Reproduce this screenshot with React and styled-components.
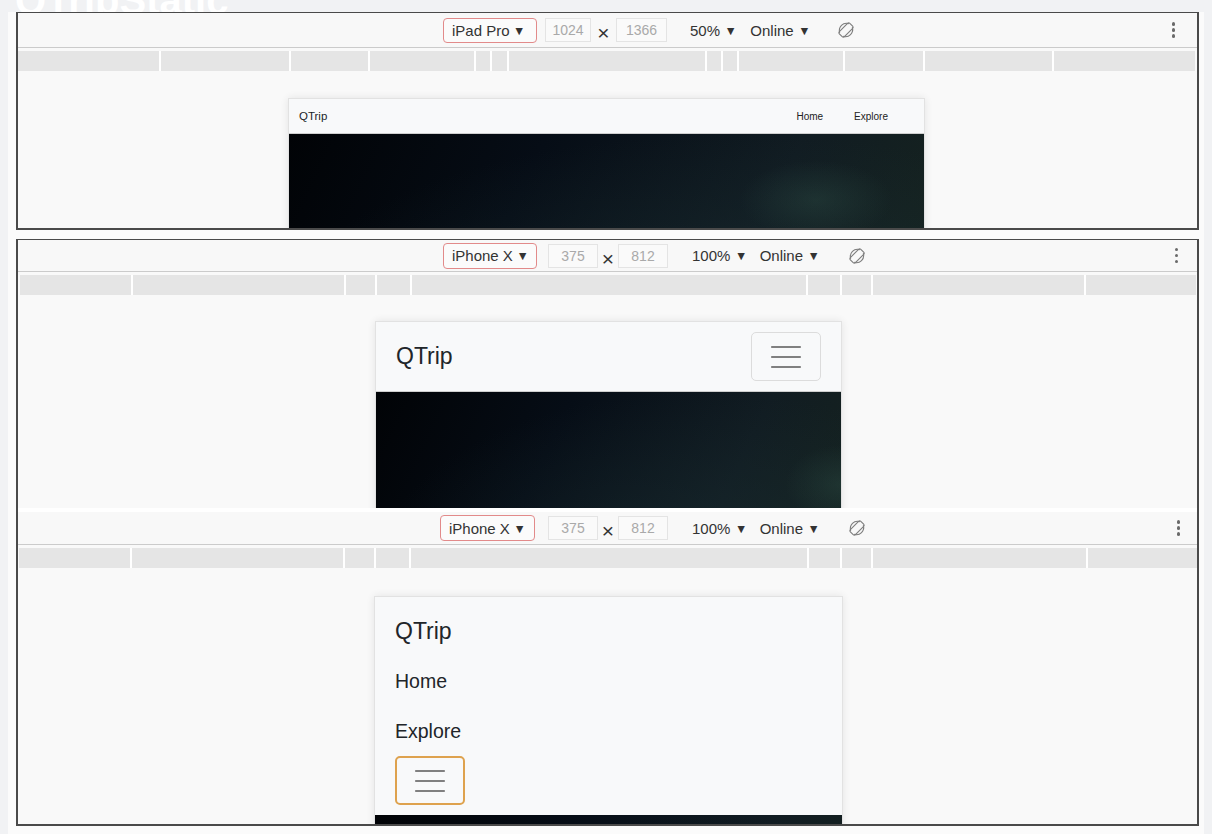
import React from "react";
import styled, { createGlobalStyle } from "styled-components";

const GlobalStyle = createGlobalStyle`
  html, body {
    margin: 0;
    padding: 0;
    background: #f1f2f4;
  }
  body {
    font-family: "Liberation Sans", Arial, sans-serif;
    overflow: hidden;
  }
`;

const Page = styled.div`
  width: 1212px;
  height: 834px;
  overflow: hidden;
`;

const TitleBar = styled.div`
  height: 12px;
  overflow: hidden;
  padding-left: 15px;
`;

const TitleText = styled.h1`
  margin: -20px 0 0;
  font-size: 40px;
  line-height: 40px;
  font-weight: 700;
  color: #ffffff;
`;

const Sheet = styled.div`
  margin-left: 8px;
  width: 1196px;
  height: 822px;
  background: #fbfbfb;
  display: flex;
  flex-direction: column;
`;

const Frame = styled.section`
  box-sizing: border-box;
  margin: ${(p) => p.$mt}px 0 0 8px;
  width: 1183px;
  height: ${(p) => p.$h}px;
  flex-shrink: 0;
  display: flex;
  flex-direction: column;
  overflow: hidden;
  background: #f9f9f9;
  border-left: 2px solid #4a4a4a;
  border-right: 2px solid #4a4a4a;
  border-top: ${(p) => (p.$top ? "1px solid #4a4a4a" : "none")};
  border-bottom: ${(p) => (p.$bottom ? "2px solid #4a4a4a" : "none")};
`;

const Strip = styled.div`
  height: ${(p) => p.$h}px;
  background: #ffffff;
  flex-shrink: 0;
`;

const Toolbar = styled.div`
  box-sizing: border-box;
  height: ${(p) => p.$h}px;
  flex-shrink: 0;
  display: flex;
  align-items: center;
  padding-left: ${(p) => p.$pl}px;
  padding-right: ${(p) => p.$pr}px;
  background: #f8f8f8;
  border-bottom: 1px solid #cbcbcb;
  color: #333;
  font-size: 15px;
`;

const DeviceSelect = styled.div`
  box-sizing: border-box;
  width: ${(p) => p.$w}px;
  height: ${(p) => p.$h}px;
  display: flex;
  align-items: center;
  gap: 6px;
  padding-left: 8px;
  border: 1px solid #e28a8a;
  border-radius: 4px;
  background: #fbfbfb;
  white-space: nowrap;
`;

const Caret = styled.span`
  font-family: "DejaVu Sans", sans-serif;
  font-size: 9.5px;
  color: #333;
`;

const SizeInput = styled.div`
  box-sizing: border-box;
  width: ${(p) => p.$w}px;
  height: 24px;
  margin-left: ${(p) => p.$ml || 0}px;
  display: flex;
  align-items: center;
  justify-content: center;
  border: 1px solid #e4e4e4;
  background: #fafafa;
  color: #a9a9a9;
  font-size: 14px;
`;

const Times = styled.span`
  width: ${(p) => p.$w}px;
  text-align: center;
  font-size: 21px;
  line-height: 21px;
  color: #333;
  padding-top: 5px;
`;

const Menu = styled.div`
  margin-left: ${(p) => p.$ml}px;
  display: flex;
  align-items: center;
  gap: 7px;
  white-space: nowrap;
`;

const RotateButton = styled.svg`
  margin-left: ${(p) => p.$ml}px;
  width: 18px;
  height: 18px;
  flex-shrink: 0;
`;

const Kebab = styled.div`
  margin-left: auto;
  display: flex;
  flex-direction: column;
  gap: 2.5px;
  span {
    width: 3.5px;
    height: 3.5px;
    border-radius: 50%;
    background: #6a6a6a;
  }
`;

const Ruler = styled.div`
  margin: 3px 0 0 ${(p) => p.$pl}px;
  width: fit-content;
  height: 20px;
  flex-shrink: 0;
  display: flex;
  gap: 2px;
  background: #ffffff;
`;

const Segment = styled.div`
  height: 100%;
  background: #e5e5e5;
`;

const Viewport = styled.div`
  flex: 1;
  display: flex;
  justify-content: center;
  padding-top: ${(p) => p.$pt}px;
  padding-left: ${(p) => Math.max(0, p.$shift)}px;
  padding-right: ${(p) => Math.max(0, -p.$shift)}px;
`;

const Preview = styled.div`
  box-sizing: border-box;
  width: ${(p) => p.$w}px;
  flex-shrink: 0;
  border: 1px solid #e2e2e2;
  background: #f8f9fa;
  box-shadow: 0 0 8px rgba(0, 0, 0, 0.09);
  display: flex;
  flex-direction: column;
`;

const Navbar = styled.nav`
  box-sizing: border-box;
  height: ${(p) => p.$h}px;
  display: flex;
  align-items: center;
  padding: 0 ${(p) => p.$px}px;
  color: #212529;
  border-bottom: 1px solid #cfcfcf;
`;

const Brand = styled.span`
  font-size: ${(p) => p.$size}px;
`;

const NavLinks = styled.div`
  margin-left: auto;
  margin-right: 26px;
  display: flex;
  gap: 31px;
  font-size: 10px;
  color: #222;
`;

const Toggler = styled.div`
  box-sizing: border-box;
  margin-left: ${(p) => (p.$push ? "auto" : "0")};
  width: 70px;
  height: 49px;
  border: ${(p) => (p.$focus ? "2px solid #dea24e" : "1px solid #dcdcdc")};
  border-radius: 5px;
  display: flex;
  align-items: center;
  justify-content: center;
`;

const OpenNavbar = styled.nav`
  box-sizing: border-box;
  padding: 9px 20px 10px;
  display: flex;
  flex-direction: column;
  align-items: flex-start;
  color: #212529;
`;

const OpenItem = styled.div`
  height: 50px;
  line-height: 50px;
  font-size: ${(p) => p.$size}px;
`;

const Hero = styled.div`
  flex: 1;
  min-height: 220px;
  background:
    radial-gradient(ellipse 12% 18% at ${(p) => p.$glow}, rgba(46, 78, 70, 0.38), transparent),
    radial-gradient(ellipse 70% 80% at 70% 80%, rgba(26, 46, 50, 0.55), transparent),
    linear-gradient(115deg, #010306 0%, #060d16 35%, #111c22 70%, #16241f 100%);
`;

const Burger = () => (
  <svg width="32" height="24" viewBox="0 0 32 24">
    <path
      d="M2 2h28M2 12h28M2 22h28"
      stroke="#808080"
      strokeWidth="2.2"
      strokeLinecap="round"
    />
  </svg>
);

const Rotate = ({ ml }) => (
  <RotateButton $ml={ml} viewBox="0 0 18 18">
    <g fill="none" stroke="#7d7d7d" strokeWidth="1.1" strokeLinecap="round">
      <path d="M2.6 11.4A7.2 7.2 0 0 1 11.4 2.6" />
      <path d="M15.4 6.6A7.2 7.2 0 0 1 6.6 15.4" />
      <rect x="5.4" y="1.6" width="7.2" height="14.8" rx="1.6" transform="rotate(45 9 9)" />
    </g>
  </RotateButton>
);

const DevToolbar = ({ t }) => (
  <Toolbar $h={t.h} $pl={t.pl} $pr={t.pr}>
    <DeviceSelect $w={t.selW} $h={t.selH}>
      {t.device}
      <Caret>▼</Caret>
    </DeviceSelect>
    <SizeInput $ml={t.inGap} $w={t.in1}>{t.width}</SizeInput>
    <Times $w={t.xW}>×</Times>
    <SizeInput $w={t.in2}>{t.height}</SizeInput>
    <Menu $ml={t.zoomGap}>
      {t.zoom}
      <Caret>▼</Caret>
    </Menu>
    <Menu $ml={t.onlineGap}>
      Online
      <Caret>▼</Caret>
    </Menu>
    <Rotate ml={t.rotGap} />
    <Kebab>
      <span />
      <span />
      <span />
    </Kebab>
  </Toolbar>
);

const DevRuler = ({ pl, widths }) => (
  <Ruler $pl={pl}>
    {widths.map((w, i) => (
      <Segment key={i} style={{ width: w }} />
    ))}
  </Ruler>
);

const ipadBar = {
  h: 35, pl: 425, pr: 22, device: "iPad Pro", selW: 94, selH: 25,
  inGap: 8, in1: 46, xW: 25, in2: 51, width: "1024", height: "1366",
  zoom: "50%", zoomGap: 23, onlineGap: 16, rotGap: 29,
};

const phoneBar = {
  h: 32, pl: 425, pr: 19, device: "iPhone X", selW: 94, selH: 26,
  inGap: 11, in1: 50, xW: 20, in2: 50, width: "375", height: "812",
  zoom: "100%", zoomGap: 24, onlineGap: 15, rotGap: 31,
};

const phoneBarOpen = { ...phoneBar, h: 33, pl: 422, pr: 17, selW: 95, inGap: 13 };

const ipadRuler = [141, 128, 77, 104, 14, 15, 196, 14, 14, 104, 78, 127, 141];
const phoneRuler = [111, 211, 29, 33, 394, 32, 29, 211, 110];
const phoneRulerOpen = [111, 211, 29, 33, 396, 31, 29, 213, 110];

export default function App() {
  return (
    <Page>
      <GlobalStyle />
      <TitleBar>
        <TitleText>QTripStatic</TitleText>
      </TitleBar>
      <Sheet>
        <Frame $mt={0} $h={218} $top $bottom>
          <DevToolbar t={ipadBar} />
          <DevRuler pl={0} widths={ipadRuler} />
          <Viewport $pt={27} $shift={-2}>
            <Preview $w={637}>
              <Navbar $h={35} $px={10}>
                <Brand $size={11.5}>QTrip</Brand>
                <NavLinks>
                  <span>Home</span>
                  <span>Explore</span>
                </NavLinks>
              </Navbar>
              <Hero $glow="83% 30%" />
            </Preview>
          </Viewport>
        </Frame>

        <Frame $mt={9} $h={269} $top>
          <DevToolbar t={phoneBar} />
          <DevRuler pl={2} widths={phoneRuler} />
          <Viewport $pt={26} $shift={2}>
            <Preview $w={467}>
              <Navbar $h={70} $px={20}>
                <Brand $size={23}>QTrip</Brand>
                <Toggler $push>
                  <Burger />
                </Toggler>
              </Navbar>
              <Hero $glow="100% 42%" />
            </Preview>
          </Viewport>
        </Frame>

        <Frame $mt={0} $h={318} $bottom>
          <Strip $h={4} />
          <DevToolbar t={phoneBarOpen} />
          <DevRuler pl={1} widths={phoneRulerOpen} />
          <Viewport $pt={28} $shift={2}>
            <Preview $w={469}>
              <OpenNavbar>
                <OpenItem $size={23}>QTrip</OpenItem>
                <OpenItem $size={19.5}>Home</OpenItem>
                <OpenItem $size={19.5}>Explore</OpenItem>
                <Toggler $focus>
                  <Burger />
                </Toggler>
              </OpenNavbar>
              <Hero $glow="100% 42%" />
            </Preview>
          </Viewport>
        </Frame>
      </Sheet>
    </Page>
  );
}
